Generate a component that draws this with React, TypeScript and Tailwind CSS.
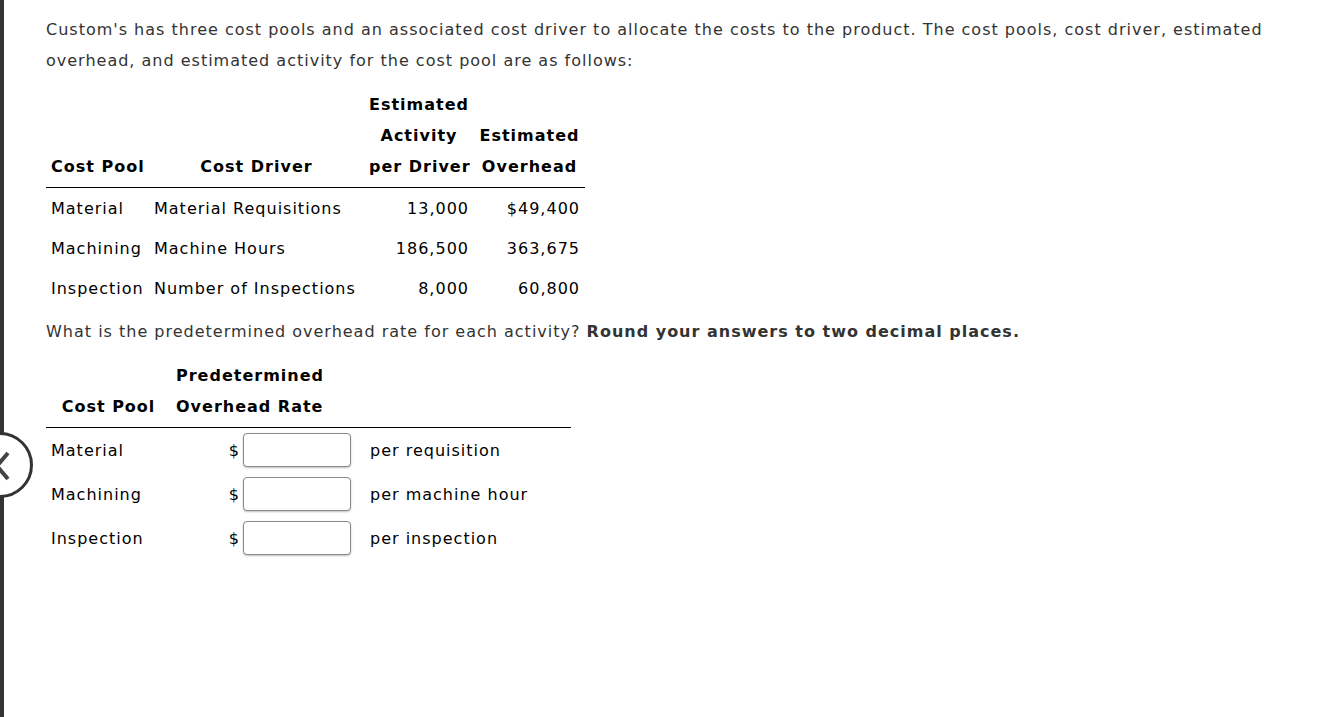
import React from "react"

const rows = [
  { pool: "Material", driver: "Material Requisitions", activity: "13,000", overhead: "$49,400" },
  { pool: "Machining", driver: "Machine Hours", activity: "186,500", overhead: "363,675" },
  { pool: "Inspection", driver: "Number of Inspections", activity: "8,000", overhead: "60,800" },
]

const rates = [
  { pool: "Material", unit: "per requisition" },
  { pool: "Machining", unit: "per machine hour" },
  { pool: "Inspection", unit: "per inspection" },
]

export default function App() {
  return (
    <div
      className="relative w-full h-[717px] bg-white text-[16px] tracking-[1px] text-[#333] overflow-hidden"
      style={{ fontFamily: '"DejaVu Sans", Verdana, sans-serif' }}
    >
      {/* left frame edge + back button */}
      <div className="absolute left-0 top-0 bottom-0 w-[4px] bg-[#333]" />
      <div className="absolute left-[-33px] top-[432px] w-[66px] h-[66px] rounded-full border-[3px] border-[#333] bg-white">
        <svg width="60" height="60" viewBox="0 0 60 60" className="block">
          <path d="M38 18 L27 31 L38 44" fill="none" stroke="#444" strokeWidth="4" />
        </svg>
      </div>

      <div className="pl-[46px] pt-[14px] pr-[60px]">
        <p className="leading-[31px]">
          Custom's has three cost pools and an associated cost driver to allocate the costs to the product. The cost pools, cost driver, estimated overhead, and estimated activity for the cost pool are as follows:
        </p>

        <table className="mt-[13px] w-[539px] table-fixed border-collapse text-black whitespace-nowrap">
          <thead>
            <tr className="border-b border-black">
              <th className="w-[103px] px-[5px] pb-[5px] text-left align-bottom leading-[31px] font-bold">Cost Pool</th>
              <th className="w-[215px] px-[5px] pb-[5px] text-center align-bottom leading-[31px] font-bold">Cost Driver</th>
              <th className="w-[110px] px-[5px] pb-[5px] text-center align-bottom leading-[31px] font-bold">
                Estimated<br />Activity<br />per Driver
              </th>
              <th className="w-[111px] px-[5px] pb-[5px] text-center align-bottom leading-[31px] font-bold">
                Estimated<br />Overhead
              </th>
            </tr>
          </thead>
          <tbody>
            {rows.map((r) => (
              <tr key={r.pool}>
                <td className="px-[5px] pt-[11px] pb-[9px] leading-[20px]">{r.pool}</td>
                <td className="px-[5px] pt-[11px] pb-[9px] leading-[20px]">{r.driver}</td>
                <td className="px-[5px] pt-[11px] pb-[9px] leading-[20px] text-right">{r.activity}</td>
                <td className="px-[5px] pt-[11px] pb-[9px] leading-[20px] text-right">{r.overhead}</td>
              </tr>
            ))}
          </tbody>
        </table>

        <p className="mt-[8px] leading-[31px]">
          What is the predetermined overhead rate for each activity?{" "}
          <b className="font-bold">Round your answers to two decimal places.</b>
        </p>

        <table className="mt-[13px] w-[525px] table-fixed border-collapse text-black whitespace-nowrap">
          <thead>
            <tr className="border-b border-black">
              <th className="w-[125px] px-[5px] pb-[5px] text-center align-bottom leading-[31px] font-bold">Cost Pool</th>
              <th className="w-[190px] px-[5px] pb-[5px] text-left align-bottom leading-[31px] font-bold">
                Predetermined<br />Overhead Rate
              </th>
              <th className="w-[210px] pb-[5px]" />
            </tr>
          </thead>
          <tbody>
            {rates.map((r) => (
              <tr key={r.pool}>
                <td className="px-[5px] pt-[6px] pb-[4px] leading-[20px]">{r.pool}</td>
                <td className="pr-[10px] py-[5px]">
                  <div className="flex items-center justify-end">
                    <span className="leading-[20px] pt-[2px]">$</span>
                    <input
                      type="text"
                      className="ml-[3px] w-[108px] h-[34px] rounded-[4px] border border-[#8a8a8a] bg-white shadow-[0_1px_2px_rgba(0,0,0,0.25)] outline-none"
                    />
                  </div>
                </td>
                <td className="pl-[9px] pt-[6px] pb-[4px] leading-[20px]">{r.unit}</td>
              </tr>
            ))}
          </tbody>
        </table>
      </div>
    </div>
  )
}
